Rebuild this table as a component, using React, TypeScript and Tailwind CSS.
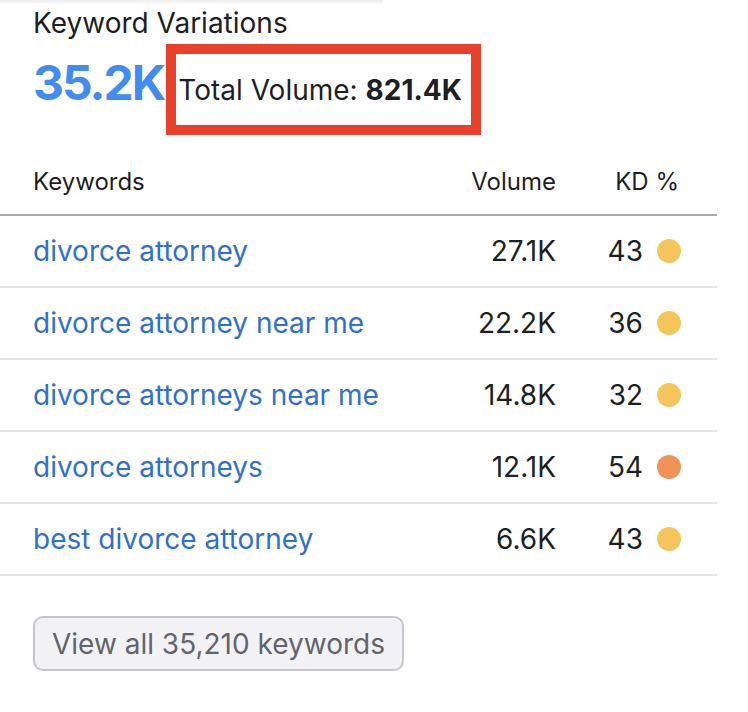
import React from "react";

const rows = [
  { kw: "divorce attorney", vol: "27.1K", kd: "43", color: "bg-[#f3c55a]" },
  { kw: "divorce attorney near me", vol: "22.2K", kd: "36", color: "bg-[#f3c55a]" },
  { kw: "divorce attorneys near me", vol: "14.8K", kd: "32", color: "bg-[#f3c55a]" },
  { kw: "divorce attorneys", vol: "12.1K", kd: "54", color: "bg-[#ef9356]" },
  { kw: "best divorce attorney", vol: "6.6K", kd: "43", color: "bg-[#f3c55a]" },
];

export default function App() {
  return (
    <div
      className="w-[748px] h-[712px] bg-white overflow-hidden text-[#1d1f24]"
      style={{ fontFamily: "Inter, 'Noto Sans', sans-serif" }}
    >
      <div className="w-[383px] h-[6px] bg-gradient-to-b from-[#eeeeef] to-white" />
      <div className="pl-[33px]">
        <div className="text-[28px] leading-[34px]">Keyword Variations</div>
        <div className="flex items-baseline mt-[4px]">
          <div className="text-[48px] font-bold text-[#418cf0] leading-none tracking-[-2px]">35.2K</div>
          <div className="ml-[2px] border-[10px] border-[#e8402a] h-[91px] w-[315px] flex items-center pl-[2px] text-[28px]">
            <span>
              Total Volume: <span className="font-bold">821.4K</span>
            </span>
          </div>
        </div>
      </div>
      <div className="w-[717px] mt-[15px]">
        <div className="flex items-center h-[66px] border-b-2 border-[#a6a9b0] text-[24px] pl-[33px] pr-[38px]">
          <div className="flex-1">Keywords</div>
          <div className="w-[120px] text-right">Volume</div>
          <div className="w-[123px] text-right">KD %</div>
        </div>
        {rows.map((r) => (
          <div
            key={r.kw}
            className="flex items-center h-[72px] border-b-2 border-[#e2e2e8] text-[28px] pl-[33px] pr-[36px]"
          >
            <div className="flex-1 text-[#2f6fcf]">{r.kw}</div>
            <div className="w-[120px] text-right">{r.vol}</div>
            <div className="w-[125px] flex items-center justify-end gap-[14px]">
              <span>{r.kd}</span>
              <span className={`w-[24px] h-[24px] rounded-full ${r.color}`} />
            </div>
          </div>
        ))}
      </div>
      <div className="pl-[33px] mt-[40px]">
        <button className="h-[55px] px-[17px] border-2 border-[#c4c6cc] bg-[#f2f2f5] rounded-[10px] text-[28px] text-[#62646c]">
          View all 35,210 keywords
        </button>
      </div>
    </div>
  );
}
